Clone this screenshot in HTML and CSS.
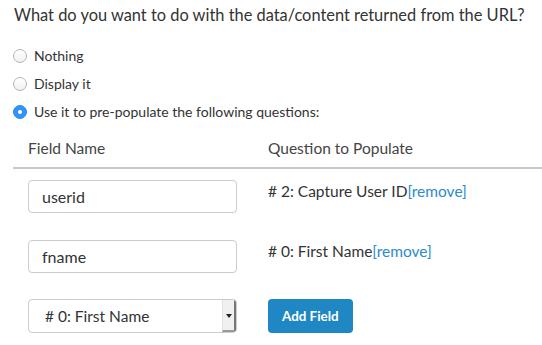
FILE: index.html
```html
<!DOCTYPE html>
<html lang="en">
<head>
  <meta charset="UTF-8" />
  <title>Populate from URL</title>
  <link rel="stylesheet" href="styles.css">
</head>
<body>
  <div class="panel">
    <h2 class="question">What do you want to do with the data/content returned from the URL?</h2>
    <div class="choices">
      <label class="choice"><input type="radio" name="action"> Nothing</label>
      <label class="choice"><input type="radio" name="action"> Display it</label>
      <label class="choice"><input type="radio" name="action" checked> Use it to pre-populate the following questions:</label>
    </div>
    <div class="mapping">
      <div class="row head">
        <div class="col-field">Field Name</div>
        <div class="col-question">Question to Populate</div>
      </div>
      <div class="row item">
        <div class="col-field"><input class="text-input" type="text" value="userid"></div>
        <div class="col-question label-q"># 2: Capture User ID<a href="#" class="remove">[remove]</a></div>
      </div>
      <div class="row item">
        <div class="col-field"><input class="text-input" type="text" value="fname"></div>
        <div class="col-question label-q"># 0: First Name<a href="#" class="remove">[remove]</a></div>
      </div>
      <div class="row add">
        <div class="col-field">
          <div class="select-box">
            <span class="select-value"># 0: First Name</span>
            <span class="select-arrow"></span>
          </div>
        </div>
        <div class="col-question"><button class="add-btn">Add Field</button></div>
      </div>
    </div>
  </div>
</body>
</html>
```

FILE: styles.css
```css
body { margin: 0; background: #fff; font-family: Lato, "Open Sans", sans-serif; color: #333; }
.panel { padding: 4px 0 0 13px; }
.question { margin: 0 0 20px 1px; font-size: 16.4px; font-weight: 400; line-height: 22px; color: #333; white-space: nowrap; }
.choices { display: flex; flex-direction: column; gap: 8px; }
.choice { display: flex; align-items: center; gap: 7px; font-size: 14px; line-height: 20px; color: #333; }
.choice input { appearance: none; -webkit-appearance: none; margin: 0; width: 14px; height: 14px; border-radius: 50%; border: 1px solid #b5b5b5; background: linear-gradient(#fff, #f1f1f1); box-sizing: border-box; position: relative; }
.choice input:checked { border-color: #2b8ff2; background: #3093f5; }
.choice input:checked::after { content: ""; position: absolute; left: 4px; top: 4px; width: 4px; height: 4px; border-radius: 50%; background: #fff; }
.mapping { margin-top: 16px; }
.row { display: flex; }
.col-field { width: 240px; padding-left: 15px; }
.col-question { flex: 1; }
.head { font-size: 15.5px; line-height: 20px; color: #444; padding-bottom: 9px; border-bottom: 2px solid #c8c8c8; }
.item { margin-top: 27px; }
.head + .item { margin-top: 11px; }
.text-input { box-sizing: border-box; width: 209px; height: 33px; border: 1px solid #ccc; border-radius: 4px; padding: 0 13px; font-family: inherit; font-size: 16px; color: #333; }
.label-q { font-size: 15.5px; line-height: 20px; padding-top: 1px; }
.remove { color: #2a8bcb; text-decoration: none; }
.add { margin-top: 26px; align-items: flex-start; }
.select-box { box-sizing: border-box; width: 209px; height: 34px; border: 1px solid #ccc; border-radius: 4px; display: flex; align-items: center; overflow: hidden; }
.select-value { flex: 1; padding-left: 16px; font-size: 15.5px; color: #333; }
.select-arrow { width: 14px; height: 100%; background: #f0f0f0; border-left: 1px solid #e2e2e2; border-right: 2px solid #777; border-bottom: 2px solid #999; box-sizing: border-box; position: relative; }
.select-arrow::after { content: ""; position: absolute; left: 3px; top: 14px; border-left: 3px solid transparent; border-right: 3px solid transparent; border-top: 4px solid #222; }
.add-btn { height: 34px; padding: 0 14px; border: none; border-radius: 4px; background: #1f88c4; color: #fff; font-family: inherit; font-weight: 700; font-size: 13.4px; cursor: pointer; }
```
